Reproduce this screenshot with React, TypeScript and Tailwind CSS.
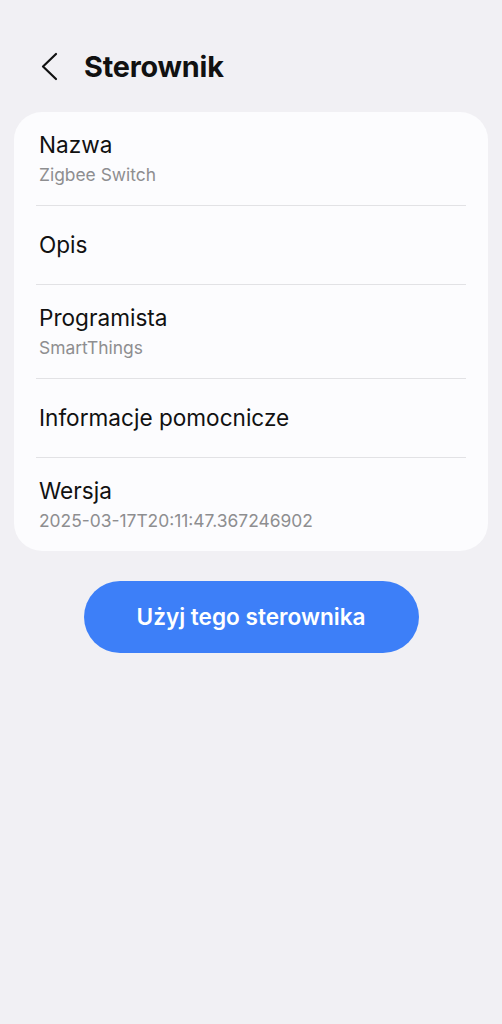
import React from "react";

const font = { fontFamily: 'Inter, "Noto Sans", Roboto, sans-serif' };

function Row({ title, sub }: { title: string; sub?: string }) {
  if (sub) {
    return (
      <div className="px-[25px] pt-[19px] pb-[19px] flex flex-col">
        <div className="text-[22.6px] leading-[28px] text-[#111111]">{title}</div>
        <div className="mt-[5px] text-[17.4px] leading-[22px] text-[#8e8e90]">{sub}</div>
      </div>
    );
  }
  return (
    <div className="px-[25px] h-[78px] flex items-center">
      <div className="text-[22.6px] leading-[28px] text-[#111111]">{title}</div>
    </div>
  );
}

function Divider() {
  return <div className="mx-[22px] h-px bg-[#e2e2e5]" />;
}

export default function App() {
  return (
    <div className="min-h-[1024px] w-full bg-[#f1f0f4]" style={font}>
      <div className="flex items-center h-[112px] pl-[40px] pt-[22px]">
        <svg width="20" height="30" viewBox="0 0 20 30" className="mr-[24px]">
          <path d="M16 2 L3 14.5 L16 27" fill="none" stroke="#111" strokeWidth="2.2" strokeLinecap="round" strokeLinejoin="round" />
        </svg>
        <h1 className="text-[28.8px] font-bold text-[#111111] leading-[36px] tracking-[-0.2px]">Sterownik</h1>
      </div>
      <div className="mx-[14px] rounded-[28px] bg-[#fcfcfe] overflow-hidden">
        <Row title="Nazwa" sub="Zigbee Switch" />
        <Divider />
        <Row title="Opis" />
        <Divider />
        <Row title="Programista" sub="SmartThings" />
        <Divider />
        <Row title="Informacje pomocnicze" />
        <Divider />
        <Row title="Wersja" sub="2025-03-17T20:11:47.367246902" />
      </div>
      <div className="flex justify-center mt-[30px]">
        <button className="w-[335px] h-[72px] rounded-full bg-[#3d7ff8] text-white text-[22.6px] font-semibold">
          Użyj tego sterownika
        </button>
      </div>
    </div>
  );
}
